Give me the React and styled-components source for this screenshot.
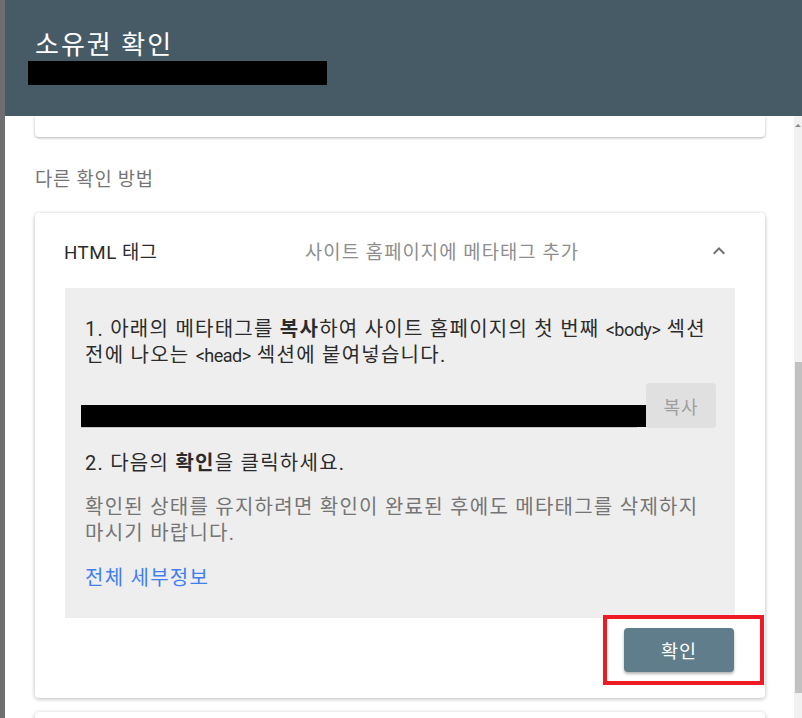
import styled, { createGlobalStyle } from "styled-components";

const GlobalStyle = createGlobalStyle`
  html, body {
    margin: 0;
    padding: 0;
    background: #ffffff;
  }
  body {
    font-family: Roboto, "Noto Sans CJK KR", sans-serif;
    color: #2b2b2b;
    word-break: keep-all;
  }
  * { box-sizing: border-box; }
`;

export default function App() {
  return (
    <>
      <GlobalStyle />
      <Screen>
        <Backdrop />
        <Dialog>
          <Header>
            <Title>소유권 확인</Title>
            <Redacted width={299} height={24} offset={-7} />
          </Header>
          <Body>
            <Content>
              <PrevCard />
              <SectionLabel>다른 확인 방법</SectionLabel>
              <Card>
                <CardHeader>
                  <MethodName>HTML 태그</MethodName>
                  <MethodHint>사이트 홈페이지에 메타태그 추가</MethodHint>
                  <Chevron viewBox="0 0 24 24">
                    <path d="M12 8l-6 6 1.41 1.41L12 10.83l4.59 4.58L18 14z" />
                  </Chevron>
                </CardHeader>
                <Instructions>
                  <Step>
                    1. 아래의 메타태그를 <b>복사</b>하여 사이트 홈페이지의 첫 번째{" "}
                    <Tag>&lt;body&gt;</Tag> 섹션 전에 나오는 <Tag>&lt;head&gt;</Tag>{" "}
                    섹션에 붙여넣습니다.
                  </Step>
                  <CopyRow>
                    <TagField>
                      <Redacted height={22} />
                    </TagField>
                    <CopyButton>복사</CopyButton>
                  </CopyRow>
                  <Step gap={22}>
                    2. 다음의 <b>확인</b>을 클릭하세요.
                  </Step>
                  <Note>
                    확인된 상태를 유지하려면 확인이 완료된 후에도 메타태그를 삭제하지
                    마시기 바랍니다.
                  </Note>
                  <DetailsLink href="#">전체 세부정보</DetailsLink>
                </Instructions>
                <Actions>
                  <ButtonWrap>
                    <VerifyButton>확인</VerifyButton>
                    <Highlight />
                  </ButtonWrap>
                </Actions>
              </Card>
              <NextCard />
            </Content>
            <ScrollTrack>
              <ScrollArrow />
              <ScrollThumb />
            </ScrollTrack>
          </Body>
        </Dialog>
      </Screen>
    </>
  );
}

const Screen = styled.div`
  display: flex;
  height: 718px;
  overflow: hidden;
`;

const Backdrop = styled.div`
  width: 5px;
  flex-shrink: 0;
  background: #6e6e70;
`;

const Dialog = styled.div`
  flex: 1;
  display: flex;
  flex-direction: column;
  min-width: 0;
`;

const Header = styled.div`
  height: 116px;
  flex-shrink: 0;
  background: #475b66;
  padding: 30px 0 0 30px;
`;

const Title = styled.div`
  font-size: 26px;
  line-height: 30px;
  letter-spacing: 2px;
  color: #ffffff;
`;

const Redacted = styled.div`
  background: #000000;
  height: ${(p) => p.height}px;
  width: ${(p) => (p.width ? `${p.width}px` : "auto")};
  margin-left: ${(p) => p.offset || 0}px;
  margin-top: ${(p) => (p.width ? 1 : 0)}px;
`;

const Body = styled.div`
  flex: 1;
  display: flex;
  min-height: 0;
`;

const Content = styled.div`
  flex: 1;
  padding: 0 29px 0 30px;
  overflow: hidden;
`;

const PrevCard = styled.div`
  height: 21px;
  background: #fff;
  border-radius: 0 0 4px 4px;
  box-shadow: 0 1px 3px rgba(0, 0, 0, 0.3);
`;

const SectionLabel = styled.div`
  margin: 31px 0 21px;
  font-size: 18.75px;
  line-height: 24px;
  letter-spacing: 0.75px;
  color: #757575;
`;

const Card = styled.div`
  background: #fff;
  border-radius: 4px;
  box-shadow: 0 1px 4px rgba(0, 0, 0, 0.28);
  padding: 0 30px 26px;
`;

const CardHeader = styled.div`
  height: 75px;
  display: flex;
  align-items: center;
`;

const MethodName = styled.div`
  width: 241px;
  margin-left: -1px;
  font-size: 18.75px;
  letter-spacing: 0.5px;
  color: #2b2b2b;
`;

const MethodHint = styled.div`
  flex: 1;
  font-size: 18.75px;
  letter-spacing: 1.1px;
  color: #8e8e8e;
`;

const Chevron = styled.svg`
  width: 24px;
  height: 24px;
  margin-right: 4px;
  fill: #6f6f6f;
`;

const Instructions = styled.div`
  background: #eeeeee;
  padding: 28px 20px 27px;
`;

const Step = styled.div`
  margin-top: ${(p) => p.gap || 0}px;
  font-size: 20px;
  line-height: 26px;
  letter-spacing: 1.25px;
  color: #2b2b2b;

  b {
    font-weight: 700;
  }
`;

const Tag = styled.span`
  font-size: 18px;
  line-height: 1;
  letter-spacing: -0.5px;
`;

const CopyRow = styled.div`
  display: flex;
  align-items: flex-end;
  margin: 15px -1px 0 -4px;
`;

const TagField = styled.div`
  flex: 1;
  margin-right: 9px;
  border-bottom: 1px solid #c6c6c6;

  & > div {
    margin-right: -9px;
  }
`;

const CopyButton = styled.button`
  width: 70px;
  height: 45px;
  border: none;
  border-radius: 4px;
  background: #e0e0e0;
  color: #9e9e9e;
  font-family: inherit;
  font-size: 18px;
  letter-spacing: 1px;
  padding: 0;
`;

const Note = styled.div`
  margin-top: 18px;
  font-size: 20px;
  line-height: 26px;
  letter-spacing: 1.25px;
  color: #757575;
`;

const DetailsLink = styled.a`
  display: block;
  margin-top: 19px;
  font-size: 20px;
  line-height: 26px;
  letter-spacing: 1.25px;
  color: #3f7ff0;
  text-decoration: none;
`;

const Actions = styled.div`
  display: flex;
  justify-content: flex-end;
  padding-top: 10px;
  margin-right: 1px;
`;

const ButtonWrap = styled.div`
  position: relative;
`;

const VerifyButton = styled.button`
  display: block;
  width: 110px;
  height: 44px;
  border: none;
  border-radius: 4px;
  background: #607d8b;
  color: #ffffff;
  font-family: inherit;
  font-size: 18.5px;
  letter-spacing: 1px;
  padding: 0;
  box-shadow: 0 2px 3px rgba(0, 0, 0, 0.3);
`;

const Highlight = styled.div`
  position: absolute;
  left: -21px;
  top: -13px;
  right: -30px;
  bottom: -13px;
  border: 4px solid #ed1c24;
  pointer-events: none;
`;

const NextCard = styled.div`
  margin-top: 14px;
  height: 40px;
  background: #fff;
  border-radius: 4px;
  box-shadow: 0 1px 4px rgba(0, 0, 0, 0.28);
`;

const ScrollTrack = styled.div`
  width: 8px;
  flex-shrink: 0;
  background: #f1f1f1;
  display: flex;
  flex-direction: column;
  align-items: flex-end;
`;

const ScrollArrow = styled.div`
  margin: 8px 1px 0 0;
  width: 0;
  height: 0;
  border-left: 3px solid transparent;
  border-right: 3px solid transparent;
  border-bottom: 3px solid #8a8a8a;
`;

const ScrollThumb = styled.div`
  margin-top: 235px;
  width: 7px;
  height: 331px;
  background: #c1c1c1;
`;
